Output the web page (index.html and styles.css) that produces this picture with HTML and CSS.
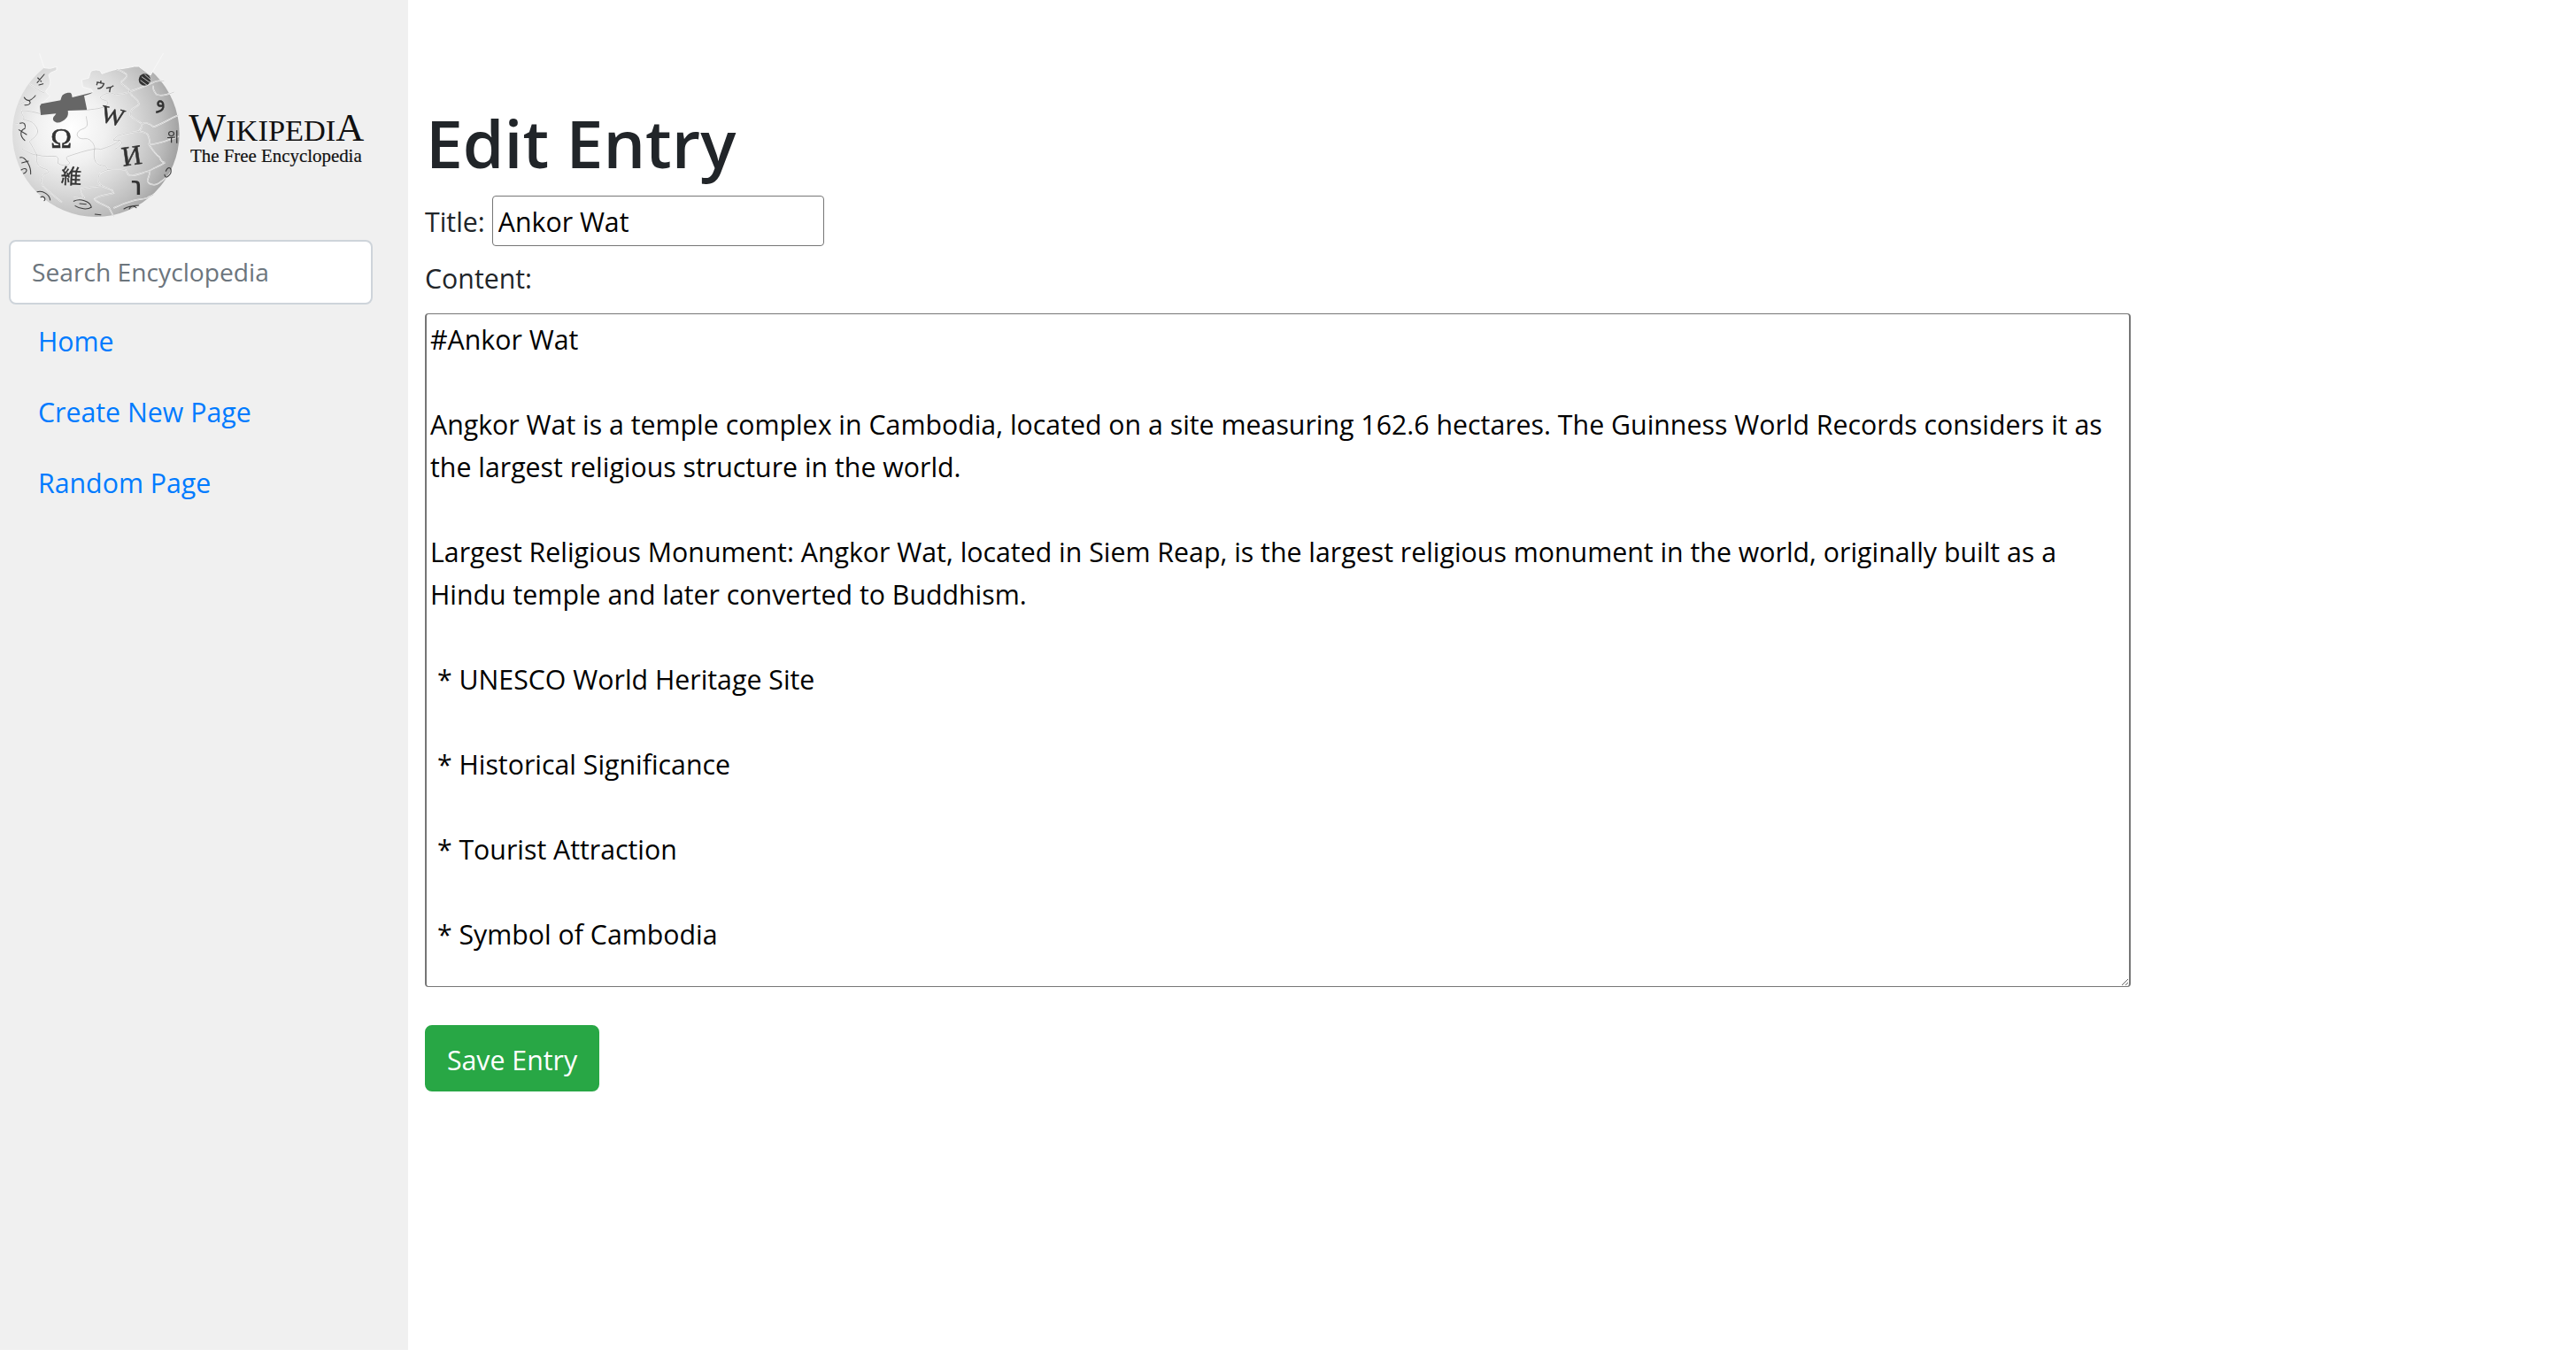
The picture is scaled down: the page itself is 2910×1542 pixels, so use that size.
FILE: index.html
```html
<!DOCTYPE html>
<html lang="en">
<head>
<meta charset="utf-8">
<title>Edit Entry</title>
<link rel="stylesheet" href="styles.css">
</head>
<body>
<div class="app">
  <aside class="sidebar">
    <svg class="logo" viewBox="0 0 1260 600" width="420" height="200" role="img" aria-label="Wikipedia, The Free Encyclopedia">
      <defs>
        <radialGradient id="ball" gradientUnits="userSpaceOnUse" cx="240" cy="255" r="430">
          <stop offset="0" stop-color="#ffffff"/>
          <stop offset="0.28" stop-color="#f0f0f0"/>
          <stop offset="0.5" stop-color="#d9d9d9"/>
          <stop offset="0.72" stop-color="#bdbdbd"/>
          <stop offset="0.9" stop-color="#9a9a9a"/>
          <stop offset="1" stop-color="#848484"/>
        </radialGradient>
        <filter id="soft"><feGaussianBlur stdDeviation="0.9"/></filter>
        <g id="seam-lines">
          <path d="M75 325 C95 335 110 345 125 345 C150 352 170 348 190 350 C205 355 190 378 200 375 C215 385 240 380 235 370 C225 360 222 352 230 350 C260 340 290 330 320 325 C330 322 340 328 345 325 C365 318 390 310 405 295"/>
          <path d="M320 325 C318 345 318 360 325 370 C335 382 350 380 360 385 L365 395 C350 400 335 405 335 415 C330 430 335 445 345 450 C360 458 375 458 380 465 L385 475 C360 482 330 482 320 495 C330 510 360 515 370 525 L385 553"/>
          <path d="M125 345 C122 360 125 372 130 380 C140 392 160 392 165 400 C165 408 148 408 145 415 C135 430 140 440 145 450 C165 470 190 490 210 505"/>
          <path d="M345 450 C320 452 295 455 275 460 C265 470 280 480 285 490 C272 494 260 490 250 490"/>
          <path d="M365 395 C385 392 405 392 425 395 C430 405 432 412 440 415 C465 415 490 402 505 400 C512 412 498 425 500 435 C505 445 520 448 530 445 C550 435 565 420 575 410"/>
          <path d="M385 525 C410 512 430 505 450 500 C470 494 490 495 500 490 C505 485 515 484 520 480"/>
          <path d="M295 193 C310 190 330 190 345 185 C358 182 368 172 365 165 C358 158 340 158 340 150 C345 142 362 135 375 135 C385 136 390 142 395 140 C420 138 430 135 440 130 C470 122 500 108 530 95 C540 92 550 95 556 95"/>
          <path d="M395 55 C410 60 425 65 430 75 C432 85 410 92 410 100 C415 112 440 118 440 130 C440 138 448 145 455 150 C465 158 472 168 470 175 C460 185 445 188 445 195 C440 205 442 212 445 215 C455 228 478 232 480 240 C482 252 475 260 470 265 C445 270 420 272 400 280 C392 285 385 290 385 295 C392 296 402 294 405 295 C415 300 415 308 405 315 C400 320 392 324 390 325"/>
          <path d="M470 265 C485 268 495 270 500 275 C508 290 508 300 505 310 C515 325 530 345 540 352 C545 368 555 372 560 370 C540 385 515 390 505 400"/>
          <path d="M480 240 C495 235 505 235 520 250 C540 245 570 225 605 210"/>
          <path d="M505 310 C530 310 560 300 606 282"/>
          <path d="M520 110 C515 125 528 135 530 140 C545 148 570 140 590 132"/>
          <path d="M135 205 C118 200 95 195 75 195 C68 205 85 215 80 225 C72 235 60 240 50 240"/>
          <path d="M80 225 C95 230 110 232 115 240 C128 255 130 265 125 275 C118 288 105 292 100 300 C108 315 118 330 125 345"/>
          <path d="M292 214 C296 240 302 250 278 258 C252 268 258 294 288 290 C310 286 325 320 320 325"/>
          <path d="M100 105 C118 115 135 130 150 135 M60 175 C85 165 105 150 125 150"/>
        </g>
      </defs>
      <g filter="url(#soft)">
        <circle cx="325" cy="272" r="283" fill="url(#ball)"/>
        <path class="gap" d="M130 -10 L150 50 L170 52 L192 46 L192 58 C178 64 166 68 165 75 C168 88 172 96 170 105 C166 118 156 124 155 130 C158 138 168 142 170 145 C160 155 148 165 140 175 L205 160 C208 150 210 142 215 140 C224 134 234 133 240 135 C244 140 244 146 245 150 L315 133 L310 123 L280 115 L277 90 L300 85 C304 78 304 66 310 60 C320 56 332 56 340 60 L345 70 C362 64 378 58 395 55 C415 52 435 50 455 45 L470 45 L510 75 L560 -10 Z"/>
        <path class="hole" d="M135 180 L140 172 L205 160 C208 150 210 142 215 140 C224 134 234 133 240 135 C244 140 244 146 245 150 L315 133 C305 140 295 142 285 145 L295 193 L230 195 C232 205 230 214 225 220 C215 232 200 238 190 235 C182 232 178 226 180 220 C182 214 188 210 190 205 L138 210 Z"/>
        <use href="#seam-lines" class="seam-light"/>
        <use href="#seam-lines" class="seam-dark"/>
        <text class="g g-serif" x="172" y="320" font-size="96">Ω</text>
        <text class="g g-serif" x="342" y="240" font-size="84" transform="rotate(14 380 215)">W</text>
        <text class="g g-serif" x="412" y="378" font-size="94" transform="rotate(-8 450 345)">И</text>
        <text class="g g-cjk" x="207" y="443" font-size="70" transform="rotate(3 240 415)">維</text>
        <text class="g g-cjk" x="322" y="124" font-size="35" transform="rotate(12 350 110)">ウィ</text>
        <text class="g g-arabic" x="526" y="182" font-size="72" transform="rotate(-12 545 170)">و</text>
        <text class="g g-korean" x="565" y="301" font-size="46">위</text>
        <text class="g g-hebrew" x="444" y="466" font-size="62">ך</text>
        <ellipse class="ball-mark" cx="490" cy="90" rx="20" ry="20"/>
        <g class="scrib-light">
          <path d="M476 92 L500 110 M480 80 L508 100 M490 72 L510 90"/>
        </g>
        <g class="scrib">
          <path d="M126 100 L150 72 M128 84 L140 96 M132 108 L146 104"/>
          <path d="M82 150 C94 170 108 158 120 144 M84 176 C98 178 110 168 96 160"/>
          <path d="M68 238 C84 232 88 244 84 256 C68 262 66 280 84 296 M64 260 L90 276"/>
          <path d="M68 354 C86 348 106 386 104 410 M72 396 C90 384 98 400 80 408 M74 372 L96 366"/>
          <path d="M126 470 C146 464 168 480 170 498 M138 488 C150 482 156 496 150 500"/>
          <path d="M250 502 C270 492 305 500 310 522 C296 532 270 528 255 518 M270 510 L292 512"/>
          <path d="M420 528 C440 516 456 518 470 516 M438 528 C442 518 454 516 462 524"/>
          <path d="M562 400 C570 382 584 386 578 408 C570 420 560 426 558 412"/>
          <path d="M322 546 L342 548"/>
        </g>
      </g>
      <text class="wordmark" x="640" y="298" textLength="594" lengthAdjust="spacingAndGlyphs"><tspan class="cap">W</tspan>IKIPEDI<tspan class="cap">A</tspan></text>
      <text class="tagline" x="645" y="370" textLength="581" lengthAdjust="spacingAndGlyphs">The Free Encyclopedia</text>
    </svg>
    <input class="search" type="text" placeholder="Search Encyclopedia">
    <ul class="nav">
      <li><a href="#">Home</a></li>
      <li><a href="#">Create New Page</a></li>
      <li><a href="#">Random Page</a></li>
    </ul>
  </aside>
  <main class="main">
    <h1 class="heading">Edit Entry</h1>
    <form class="entry">
      <div class="title-row">
        <label class="title-label" for="title">Title:</label>
        <input id="title" class="title-input" type="text" value="Ankor Wat">
      </div>
      <label class="content-label" for="content">Content:</label>
      <textarea id="content" class="content">#Ankor Wat

Angkor Wat is a temple complex in Cambodia, located on a site measuring 162.6 hectares. The Guinness World Records considers it as the largest religious structure in the world.

Largest Religious Monument: Angkor Wat, located in Siem Reap, is the largest religious monument in the world, originally built as a Hindu temple and later converted to Buddhism.

 * UNESCO World Heritage Site

 * Historical Significance

 * Tourist Attraction

 * Symbol of Cambodia</textarea>
      <button class="save" type="button">Save Entry</button>
    </form>
  </main>
</div>
</body>
</html>
```
FILE: styles.css
```css
* { box-sizing: border-box; }

body {
  margin: 0;
  background: #fff;
  color: #212529;
  font-family: "Open Sans", "Noto Sans", sans-serif;
  font-size: 30.3px;
  line-height: 48px;
}

.app {
  display: flex;
  height: 1525px;
}

.sidebar {
  flex: 0 0 461px;
  padding: 60px 40px 0 10px;
  background: #f0f0f0;
}

.logo {
  display: block;
  margin-left: -10px;
}

.gap { fill: #f0f0f0; stroke: #f8f8f8; stroke-width: 3; }
.hole { fill: #666; }
.seam-light { fill: none; stroke: #fcfcfc; stroke-width: 4.5; }
.seam-dark { fill: none; stroke: #a6a6a6; stroke-width: 1.6; }
.scrib path { fill: none; stroke: #3a3a3a; stroke-width: 3.2; stroke-linecap: round; }
.scrib-light path { fill: none; stroke: #e8e8e8; stroke-width: 2.4; }
.ball-mark { fill: #333; }
.g { fill: #333; stroke: #333; stroke-width: 1; }
.g-serif { font-family: "Liberation Serif", serif; stroke-width: 1.6; }
.g-cjk { font-family: "Noto Sans CJK JP", sans-serif; }
.g-korean { font-family: "Noto Sans CJK KR", sans-serif; stroke-width: 0; }
.g-arabic { font-family: "DejaVu Sans", sans-serif; stroke-width: 0.5; }
.g-hebrew { font-family: "DejaVu Sans", sans-serif; font-weight: 700; stroke-width: 0; }

.wordmark {
  font-family: "Liberation Serif", serif;
  font-size: 104px;
  fill: #111;
}
.wordmark .cap { font-size: 134px; }
.tagline {
  font-family: "Liberation Serif", serif;
  font-size: 62px;
  fill: #111;
  stroke: #111;
  stroke-width: 0.6;
}

.search {
  display: block;
  width: 411px;
  height: 73px;
  margin-top: 11px;
  padding: 0 24px 2px;
  border: 2px solid #ced4da;
  border-radius: 8px;
  background: #fff;
  color: #495057;
  font: inherit;
  font-size: 28.2px;
}
.search::placeholder { color: #6c757d; opacity: 1; }

.nav {
  margin: 2px 0 0;
  padding: 0;
  list-style: none;
}
.nav a {
  display: block;
  padding: 16px 32px 16px 33px;
  color: #007bff;
  text-decoration: none;
}

.main {
  flex: 1;
  padding: 113px 0 0 19px;
}

.heading {
  margin: 0 0 12px 1px;
  font-size: 75px;
  font-weight: 600;
  line-height: 96px;
}

.title-row {
  display: flex;
  align-items: center;
  gap: 8px;
  height: 57px;
}

.title-label { padding-top: 2px; }

.title-input {
  width: 375px;
  height: 57px;
  padding: 2px 6px 0;
  border: 1px solid #767676;
  border-radius: 4px;
  color: #000;
  font: inherit;
}

.content-label {
  display: block;
  margin: 13px 0 15px;
}

.content {
  display: block;
  width: 1927px;
  height: 761px;
  padding: 5px 3px 5px 4px;
  border: solid #767676;
  border-width: 1px 2px;
  border-radius: 4px;
  color: #000;
  font: inherit;
  overflow: hidden;
}

.save {
  display: block;
  width: 197px;
  height: 75px;
  margin-top: 43px;
  padding: 5px 0 0;
  border: 2px solid #28a745;
  border-radius: 8px;
  background: #28a745;
  color: #fff;
  font: inherit;
}
```
